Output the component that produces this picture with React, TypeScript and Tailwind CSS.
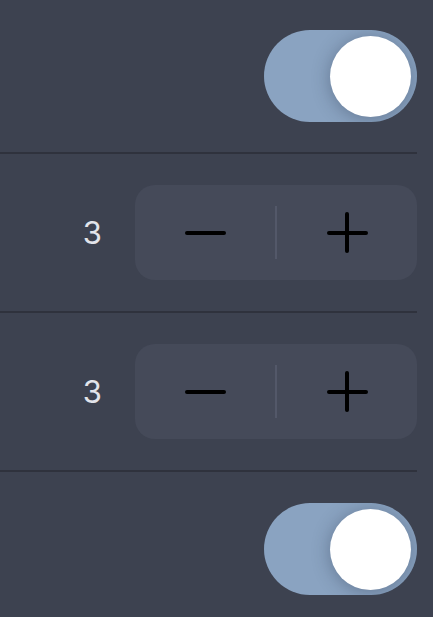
import React from "react"

function Toggle() {
  return (
    <div className="relative h-[92px] w-[153px] overflow-hidden rounded-full bg-[#8aa3c1]">
      <div className="absolute right-[6px] top-[6px] h-[81px] w-[81px] rounded-full bg-white shadow-[0_2px_18px_rgba(30,40,60,0.35)]" />
    </div>
  )
}

function Stepper({ value }: { value: number }) {
  return (
    <div className="flex items-center gap-[33px]">
      <span className="text-[31px] leading-none text-[#e2e4ea] [font-family:Inter,'Noto_Sans',sans-serif]">{value}</span>
      <div className="flex h-[95px] w-[282px] items-center rounded-[20px] bg-[#454a59]">
        <button className="flex h-full flex-1 items-center justify-center">
          <span className="block h-[4px] w-[41px] rounded-full bg-black" />
        </button>
        <span className="block h-[53px] w-[2px] bg-[#535869]" />
        <button className="flex h-full flex-1 items-center justify-center">
          <span className="relative block h-[41px] w-[41px]">
            <span className="absolute left-0 top-[18.5px] block h-[4px] w-[41px] rounded-full bg-black" />
            <span className="absolute left-[18.5px] top-0 block h-[41px] w-[4px] rounded-full bg-black" />
          </span>
        </button>
      </div>
    </div>
  )
}

export default function App() {
  return (
    <div className="h-[617px] w-full overflow-hidden bg-[#3d4250] pr-[16px]">
      <div className="flex h-[154px] items-center justify-end border-b-2 border-[#2f323d]">
        <Toggle />
      </div>
      <div className="flex h-[159px] items-center justify-end border-b-2 border-[#2f323d]">
        <Stepper value={3} />
      </div>
      <div className="flex h-[159px] items-center justify-end border-b-2 border-[#2f323d]">
        <Stepper value={3} />
      </div>
      <div className="flex h-[154px] items-center justify-end">
        <Toggle />
      </div>
    </div>
  )
}
